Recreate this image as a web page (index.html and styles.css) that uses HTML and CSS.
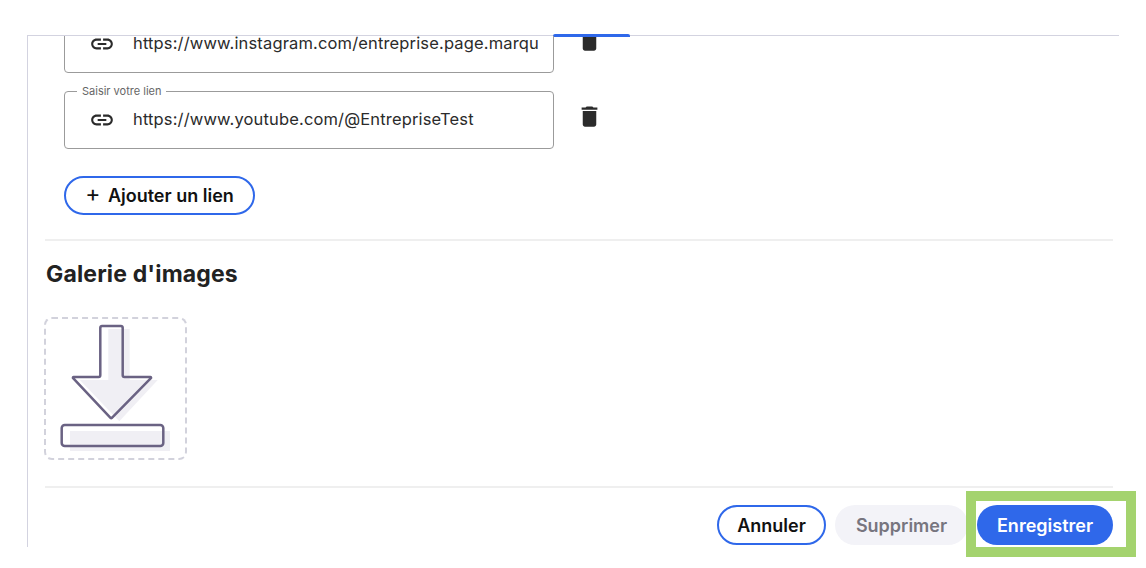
FILE: index.html
```html
<!DOCTYPE html>
<html lang="fr">
<head>
  <meta charset="UTF-8">
  <title>Galerie d'images</title>
  <link rel="stylesheet" href="styles.css">
</head>
<body>

  <div class="panel">
    <div class="tab-marker"></div>
    <div class="panel-body">

      <div class="links">
        <div class="link-row">
          <div class="field">
            <svg class="icon-link" viewBox="0 0 24 24"><path d="M3.9 12c0-1.71 1.39-3.1 3.1-3.1h4V7H7c-2.76 0-5 2.24-5 5s2.24 5 5 5h4v-1.9H7c-1.71 0-3.1-1.39-3.1-3.1zM8 13h8v-2H8v2zm9-6h-4v1.9h4c1.71 0 3.1 1.39 3.1 3.1s-1.39 3.1-3.1 3.1h-4V17h4c2.76 0 5-2.24 5-5s-2.24-5-5-5z"/></svg>
            <span class="field-value">https://www.instagram.com/entreprise.page.marqu</span>
          </div>
          <svg class="icon-trash" viewBox="0 0 24 24"><path d="M6 19c0 1.1.9 2 2 2h8c1.1 0 2-.9 2-2V7H6v12zM19 4h-3.5l-1-1h-5l-1 1H5v2h14V4z"/></svg>
        </div>
        <div class="link-row">
          <div class="field">
            <span class="field-label">Saisir votre lien</span>
            <svg class="icon-link" viewBox="0 0 24 24"><path d="M3.9 12c0-1.71 1.39-3.1 3.1-3.1h4V7H7c-2.76 0-5 2.24-5 5s2.24 5 5 5h4v-1.9H7c-1.71 0-3.1-1.39-3.1-3.1zM8 13h8v-2H8v2zm9-6h-4v1.9h4c1.71 0 3.1 1.39 3.1 3.1s-1.39 3.1-3.1 3.1h-4V17h4c2.76 0 5-2.24 5-5s-2.24-5-5-5z"/></svg>
            <span class="field-value">https://www.youtube.com/@EntrepriseTest</span>
          </div>
          <svg class="icon-trash" viewBox="0 0 24 24"><path d="M6 19c0 1.1.9 2 2 2h8c1.1 0 2-.9 2-2V7H6v12zM19 4h-3.5l-1-1h-5l-1 1H5v2h14V4z"/></svg>
        </div>
        <button class="btn btn-outline btn-add"><span class="plus">+</span> Ajouter un lien</button>
      </div>

      <hr class="divider divider-top">

      <h2 class="section-title">Galerie d'images</h2>

      <div class="dropzone">
        <svg class="drop-art" viewBox="0 0 143 143">
          <path class="art-shadow" d="M64.3 12h21.4v51h28l-38.4 41.3-39.400-41.3h28.400z"/>
          <rect class="art-shadow" x="26" y="114" width="100" height="20"/>
          <path class="art-line" d="M59 9h18a1.700 1.700 0 0 1 1.700 1.700v47.600a1.700 1.700 0 0 0 1.700 1.700h26a.7.7 0 0 1 .5 1.200l-39 39.600a1 1 0 0 1-1.400 0l-37.400-39.600a.7.7 0 0 1 .5-1.200h25a1.700 1.700 0 0 0 1.700-1.700v-47.600a1.700 1.700 0 0 1 1.700-1.700z"/>
          <rect class="art-line" x="17.700" y="108" width="101.600" height="21" rx="3"/>
        </svg>
      </div>

      <hr class="divider divider-bottom">

      <div class="actions">
        <button class="btn btn-outline btn-cancel">Annuler</button>
        <button class="btn btn-muted">Supprimer</button>
        <button class="btn btn-primary">Enregistrer</button>
      </div>

    </div>
  </div>

  <div class="highlight-box"></div>

</body>
</html>
```

FILE: styles.css
```css
* {
  box-sizing: border-box;
}

html,
body {
  height: 568px;
}

body {
  position: relative;
  margin: 0;
  padding-top: 35px;
  background-color: #ffffff;
  font-family: Inter, "Liberation Sans", sans-serif;
  color: #222222;
}

.panel {
  position: relative;
  width: 1092px;
  height: 512px;
  margin-left: 27px;
  border-top: 1px solid #d3d3e0;
  border-left: 1px solid #d3d3e0;
}

.tab-marker {
  position: absolute;
  top: -2px;
  left: 525px;
  width: 77px;
  height: 3px;
  background-color: #2f68ea;
  border-radius: 2px 2px 0 0;
}

.panel-body {
  height: 511px;
  padding: 0 6px 0 17px;
  overflow: hidden;
}

.links {
  display: flex;
  flex-direction: column;
  align-items: flex-start;
  gap: 18px;
  margin-top: -21px;
  padding-left: 19px;
}

.link-row {
  display: flex;
  align-items: flex-start;
  gap: 22px;
}

.field {
  position: relative;
  display: flex;
  align-items: center;
  width: 490px;
  height: 58px;
  padding: 0 10px 0 24px;
  border: 1px solid #9b9b9b;
  border-radius: 4px;
}

.field-label {
  position: absolute;
  top: -7px;
  left: 12px;
  padding: 0 5px;
  background-color: #ffffff;
  font-size: 11px;
  line-height: 13px;
  color: #666666;
}

.icon-link {
  flex: none;
  width: 26px;
  height: 26px;
  fill: #2b2b2b;
}

.field-value {
  margin-left: 18px;
  padding-bottom: 2px;
  font-size: 16.500px;
  line-height: 14px;
  letter-spacing: 0.150px;
  white-space: nowrap;
  color: #2b2b2b;
}

.icon-trash {
  flex: none;
  width: 27px;
  height: 27px;
  margin-top: 12px;
  fill: #2b2b2b;
}

.btn {
  height: 40px;
  padding: 0;
  border: 2px solid transparent;
  border-radius: 20px;
  font-family: inherit;
  font-size: 18px;
  font-weight: 600;
}

.btn-outline {
  background-color: #ffffff;
  border-color: #2f68ea;
  color: #111111;
}

.btn-add {
  width: 191px;
  height: 39px;
  margin-top: 9px;
}

.plus {
  font-weight: 400;
  font-size: 23px;
  line-height: 17px;
  margin-right: 3px;
}

.btn-cancel {
  width: 109px;
}

.btn-muted {
  width: 133px;
  background-color: #f3f3f8;
  color: #77757f;
}

.btn-primary {
  width: 136px;
  background-color: #2f68ea;
  color: #ffffff;
}

.divider {
  height: 2px;
  margin: 0;
  border: 0;
  background-color: #efefef;
}

.divider-top {
  margin-top: 24px;
}

.divider-bottom {
  margin-top: 26px;
}

.section-title {
  margin: 18px 0 28px 1px;
  font-size: 23px;
  line-height: 30px;
  font-weight: 700;
  letter-spacing: 0.150px;
}

.dropzone {
  width: 143px;
  height: 143px;
  margin-left: -1px;
  border: 2px dashed #d2d2dc;
  border-radius: 8px;
}

.drop-art {
  display: block;
  width: 143px;
  height: 143px;
  margin: -2px;
}

.art-shadow {
  fill: #f0eff4;
}

.art-line {
  fill: none;
  stroke: #6a6283;
  stroke-width: 2.500;
  stroke-linejoin: round;
}

.actions {
  display: flex;
  justify-content: flex-end;
  gap: 9px;
  margin-top: 17px;
}

/* annotation frame round the save button */
.highlight-box {
  position: absolute;
  top: 491px;
  left: 966px;
  width: 170px;
  height: 66px;
  border: 10px solid #a4d36e;
  pointer-events: none;
}
```
